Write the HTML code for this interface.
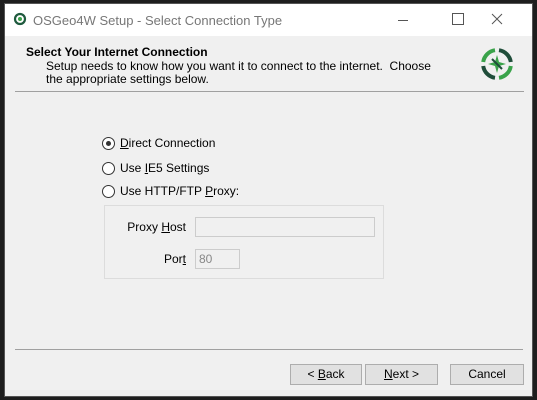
<!DOCTYPE html>
<html><head><style>
body{margin:0;width:537px;height:400px;background:#1e1e1e;position:relative;overflow:hidden;font-family:"Liberation Sans",sans-serif;font-size:12px;color:#000}
.win{position:absolute;left:4px;top:3px;width:529px;height:394px;background:#f0f0f0;border:1px solid #555;box-sizing:border-box}
.title{position:absolute;left:0;top:0;width:100%;height:32px;background:#fff}
.abs{position:absolute}
.t{position:absolute;white-space:nowrap}
.radio{position:absolute;width:11px;height:11px;border:1px solid #333;border-radius:50%;background:#fff}
.btn{position:absolute;height:19px;background:#e1e1e1;border:1px solid #adadad;text-align:center;line-height:19px}
.inp{position:absolute;background:#f0f0f0;border:1px solid #ccc;box-sizing:border-box}
u{text-decoration:underline}
</style></head><body>
<div class="win">
 <div class="title">
  <svg class="abs" style="left:8px;top:8px" width="14" height="14" viewBox="0 0 14 14"><circle cx="7" cy="7" r="5" fill="none" stroke="#1f5a3e" stroke-width="2.2"/><circle cx="7" cy="7" r="2" fill="#3aa34a"/></svg>
  <div class="t" style="left:28px;top:9px;font-size:13px;color:#777">OSGeo4W Setup - Select Connection Type</div>
  <div class="abs" style="left:393px;top:16px;width:10px;height:1px;background:#555"></div>
  <div class="abs" style="left:447px;top:9px;width:10px;height:10px;border:1px solid #555"></div>
  <svg class="abs" style="left:486px;top:9px" width="12" height="12" viewBox="0 0 12 12"><path d="M1 1L11 11M11 1L1 11" stroke="#555" stroke-width="1"/></svg>
 </div>
 <div class="t" style="left:21px;top:41px;font-weight:bold;font-size:12px">Select Your Internet Connection</div>
 <div class="t" style="left:41px;top:55px">Setup needs to know how you want it to connect to the internet.&nbsp; Choose</div>
 <div class="t" style="left:41px;top:68px">the appropriate settings below.</div>
 <svg class="abs" style="left:475px;top:43px" width="34" height="34" viewBox="0 0 34 34">
  <path d="M19 3.2 A14 14 0 0 1 30.8 15" fill="none" stroke="#1f4d3a" stroke-width="4"/>
  <path d="M30.8 19 A14 14 0 0 1 19 30.8" fill="none" stroke="#3aa34a" stroke-width="4"/>
  <path d="M15 30.8 A14 14 0 0 1 3.2 19" fill="none" stroke="#1f4d3a" stroke-width="4"/>
  <path d="M3.2 15 A14 14 0 0 1 15 3.2" fill="none" stroke="#3aa34a" stroke-width="4"/>
  <path d="M17 8 L19 15 L26 17 L19 19 L17 26 L15 19 L8 17 L15 15Z" fill="#3aa34a"/>
  <path d="M12 12 L22 22" stroke="#1f4d3a" stroke-width="2"/>
 </svg>
 <div class="abs" style="left:10px;top:87px;width:509px;height:1px;background:#a0a0a0"></div>

 <div class="radio" style="left:97px;top:133px"><div class="abs" style="left:3px;top:3px;width:5px;height:5px;border-radius:50%;background:#333"></div></div>
 <div class="t" style="left:115px;top:132px"><u>D</u>irect Connection</div>
 <div class="radio" style="left:97px;top:158px"></div>
 <div class="t" style="left:115px;top:157px">Use <u>I</u>E5 Settings</div>
 <div class="radio" style="left:97px;top:181px"></div>
 <div class="t" style="left:115px;top:180px">Use HTTP/FTP <u>P</u>roxy:</div>

 <div class="abs" style="left:99px;top:201px;width:278px;height:72px;border:1px solid #dcdcdc"></div>
 <div class="t" style="right:346px;top:216px">Proxy <u>H</u>ost</div>
 <div class="inp" style="left:190px;top:213px;width:180px;height:20px"></div>
 <div class="t" style="right:346px;top:248px">Por<u>t</u></div>
 <div class="inp" style="left:190px;top:245px;width:45px;height:20px"></div>
 <div class="t" style="left:194px;top:248px;color:#888">80</div>

 <div class="abs" style="left:10px;top:345px;width:508px;height:1px;background:#a0a0a0"></div>
 <div class="btn" style="left:285px;top:360px;width:70px">&lt; <u>B</u>ack</div>
 <div class="btn" style="left:360px;top:360px;width:71px"><u>N</u>ext &gt;</div>
 <div class="btn" style="left:445px;top:360px;width:72px">Cancel</div>
</div>
</body></html>
